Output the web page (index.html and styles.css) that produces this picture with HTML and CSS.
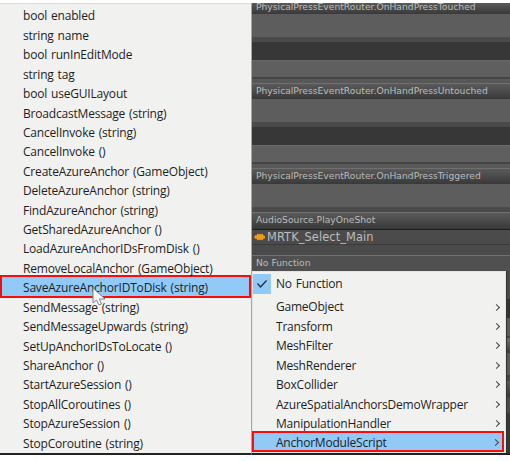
FILE: index.html
```html
<!DOCTYPE html>
<html lang="en">
<head>
<meta charset="utf-8">
<title>Function picker</title>
<link rel="stylesheet" href="styles.css">
</head>
<body>
<main class="screen">
  <ul class="menu members">
    <li>bool enabled</li>
    <li>string name</li>
    <li>bool runInEditMode</li>
    <li>string tag</li>
    <li>bool useGUILayout</li>
    <li>BroadcastMessage (string)</li>
    <li>CancelInvoke (string)</li>
    <li>CancelInvoke ()</li>
    <li>CreateAzureAnchor (GameObject)</li>
    <li>DeleteAzureAnchor (string)</li>
    <li>FindAzureAnchor (string)</li>
    <li>GetSharedAzureAnchor ()</li>
    <li>LoadAzureAnchorIDsFromDisk ()</li>
    <li>RemoveLocalAnchor (GameObject)</li>
    <li class="picked">SaveAzureAnchorIDToDisk (string)</li>
    <li>SendMessage (string)</li>
    <li>SendMessageUpwards (string)</li>
    <li>SetUpAnchorIDsToLocate ()</li>
    <li>ShareAnchor ()</li>
    <li>StartAzureSession ()</li>
    <li>StopAllCoroutines ()</li>
    <li>StopAzureSession ()</li>
    <li>StopCoroutine (string)</li>
  </ul>
  <section class="inspector">
    <div class="bar first"><span>PhysicalPressEventRouter.OnHandPressTouched</span></div>
    <div class="panel"></div>
    <div class="gap"></div>
    <div class="sub"></div>
    <div class="bar"><span>PhysicalPressEventRouter.OnHandPressUntouched</span></div>
    <div class="panel"></div>
    <div class="gap"></div>
    <div class="sub"></div>
    <div class="bar"><span>PhysicalPressEventRouter.OnHandPressTriggered</span></div>
    <div class="panel"></div>
    <div class="bar play"><span>AudioSource.PlayOneShot</span></div>
    <div class="clip">
      <svg width="11" height="8" viewBox="0 0 11 8"><path d="M0 4 1.500 2 2.500 2.500 3.500 .5 5 1.500 6 .5 7 1.500 8.500 .5 9.500 2.500 11 3v2.500L9.500 5.500 8.500 7.500 7 6.500 6 7.500 5 6.500 3.500 7.500 2.500 5.500 1.500 6z" fill="#f09a14"/></svg>
      <span>MRTK_Select_Main</span>
    </div>
    <div class="bar none"><span>No Function</span></div>
    <div class="lower">
      <ul class="menu components">
        <li class="checked"><i><svg width="12" height="10" viewBox="0 0 12 10"><path d="M1.500 4.500 4.500 8 10.500 1.500" fill="none" stroke="#1c2f40" stroke-width="1.300"/></svg></i>No Function</li>
        <li>GameObject<b></b></li>
        <li>Transform<b></b></li>
        <li>MeshFilter<b></b></li>
        <li>MeshRenderer<b></b></li>
        <li>BoxCollider<b></b></li>
        <li>AzureSpatialAnchorsDemoWrapper<b></b></li>
        <li>ManipulationHandler<b></b></li>
        <li class="picked">AnchorModuleScript<b></b></li>
      </ul>
      <div class="strip"></div>
    </div>
  </section>
  <svg class="pointer" width="15" height="20" viewBox="0 0 15 20"><path d="M1 1v15l3.500-3 2.500 5 2.500-1-2.200-5H13z" fill="#f7f7f7" stroke="#7b858d" stroke-width="1"/></svg>
</main>
</body>
</html>
```
FILE: styles.css
```css
* { box-sizing: border-box; }
body { margin: 0; background: #fff; }
.screen {
  position: relative;
  display: grid;
  grid-template-columns: 252px 258px;
  width: 510px;
  height: 455px;
  padding-top: 3px;
  overflow: hidden;
}
.menu {
  margin: 0;
  padding: 0;
  list-style: none;
  background: #f1f1f0;
  color: #1e1e1e;
  font: 12px/19.43px "Open Sans", "Noto Sans", sans-serif;
  letter-spacing: -0.19px;
  word-spacing: 1px;
  white-space: nowrap;
}
.menu li { display: flex; align-items: center; height: 19.43px; }
.members {
  height: 452px;
  padding-top: 2.4px;
  border-top: 1px solid #d5dce5;
  border-right: 1px solid #a7a7a7;
  border-bottom: 2px solid #232323;
}
.members li { padding-left: 23px; }
.menu .picked { background: #91c9f7; border: 2px solid #f80c0c; }
.members .picked {
  height: 23px;
  margin: -3.57px 0 0;
  padding: 3px 0 0 21px;
}

.inspector {
  height: 452px;
  overflow: hidden;
  background: #4a4a4a;
  color: #bcbcbc;
  font: 9.2px/13px "DejaVu Sans", sans-serif;
  white-space: nowrap;
}
.bar {
  height: 16px;
  padding-left: 4px;
  border-top: 1px solid #707070;
  background: linear-gradient(#5a5a5a, #393939);
}
.bar.first { height: 11px; line-height: 7px; border-top: 0; }
.panel { height: 28px; background: #5d5d5d; border-bottom: 5px solid #4a4a4a; }
.gap { height: 18px; background: #373737; }
.sub { height: 23px; border-top: 1px solid #696969; background: linear-gradient(#5f5f5f 16px, #444 16px 18px, #585858 18px); }
.bar.play { height: 18px; border-bottom: 1px solid #1f1f1f; }
.clip {
  display: flex;
  align-items: center;
  gap: 2px;
  height: 15px;
  padding-left: 2px;
  background: #4b4b4b;
  border-bottom: 1px solid #3a3a3a;
  font-size: 11.4px;
  letter-spacing: 0.1px;
}
.bar.none { height: 16px; margin-top: 10px; line-height: 14px; background: #505050; }
.lower { display: flex; height: 184px; border-bottom: 2px solid #222; }
.strip {
  flex: 1;
  border-left: 1px solid #333;
  background: linear-gradient(#4a4a4a 28px, #343434 28px 47px, #5b5b5b 47px 65px, #444 65px 67px, #686868 67px 69px, #3a3a3a 82px, #5a5a5a 82px 104px, #444 104px 110px, #585858 110px, #383838 126px, #4a4a4a 126px 142px, #383838 142px);
}
.components { width: 254px; height: 182px; border: 1px solid #e4e4e4; letter-spacing: -0.22px; }
.components li { padding: 0 6px 0 23px; }
.components .checked { height: 23px; padding: 1px 0 0; margin-bottom: 2.4px; }
.checked i { display: grid; place-items: center; width: 18px; height: 20px; margin-right: 5px; background: #91c9f7; }
.components .picked { width: 252px; height: 21px; margin: -2px 0 0 -1px; padding: 2px 4px 0 22px; }
.components b { width: 5px; height: 5px; margin-left: auto; border: solid #444; border-width: 1px 1px 0 0; transform: rotate(45deg); }
.pointer { position: absolute; left: 92px; top: 287px; }
```
